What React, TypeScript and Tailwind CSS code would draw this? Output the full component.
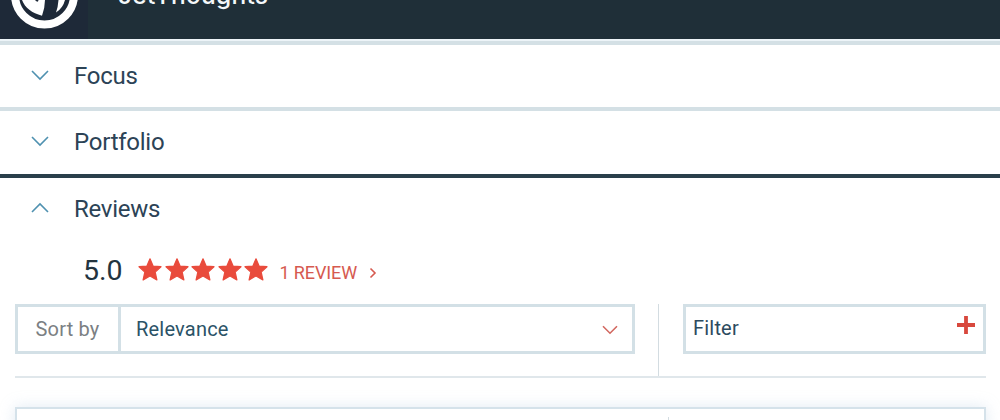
type ChevronProps = { up?: boolean; className?: string };

function Chevron({ up = false, className = "" }: ChevronProps) {
  return (
    <svg
      viewBox="0 0 18 12"
      className={`h-3 w-[18px] shrink-0 ${className}`}
      fill="none"
      stroke="currentColor"
      strokeWidth="1.6"
    >
      <path d={up ? "M1 10 9 2l8 8" : "M1 2l8 8 8-8"} />
    </svg>
  );
}

function Star() {
  return (
    <svg
      viewBox="0 0 24 24"
      className="h-6 w-6 shrink-0 fill-[#e94b3c] stroke-[#e94b3c]"
      strokeWidth="1.2"
      strokeLinejoin="round"
    >
      <path d="M12 .8 15.1 8.1 23 8.7 17.2 14.1 18.9 22 12 17.9 5.1 22 6.8 14.1 1 8.7 8.9 8.1Z" />
    </svg>
  );
}

function SectionTitle({ label, up }: { label: string; up?: boolean }) {
  return (
    <div className="flex h-[62px] items-center gap-[25px] pl-[31px] text-[#2c4356]">
      <Chevron up={up} className="mb-[3px] text-[#4f91b0]" />
      <h2 className="text-[24px] leading-[28px] tracking-[-0.25px]">{label}</h2>
    </div>
  );
}

export default function App() {
  return (
    <div className="h-[420px] w-full overflow-hidden bg-white font-['Roboto',sans-serif]">
      <header className="flex h-[39px] overflow-hidden bg-[#1f2f38]">
        <div className="h-full w-[88px] shrink-0 overflow-hidden bg-[#1e2938]">
          <svg viewBox="0 0 88 39" className="h-[39px] w-[88px]">
            <circle cx="44.5" cy="-5" r="29.5" fill="none" stroke="#fff" strokeWidth="8" />
            <path d="M22 0C25 8 32 13 42 15.7Q44.8 9 45 0H38.5Q38 3.5 35 0Z" fill="#fff" />
            <path d="M58.5 0Q58 7 56 12.5Q63 8 65 0Z" fill="#fff" />
          </svg>
        </div>
        <h1 className="-mt-[25px] h-9 pl-[30px] font-['Inter',sans-serif] text-[24.5px] font-medium leading-[40px] tracking-[0.25px] text-[#f4f8fa]">
          JetThoughts
        </h1>
      </header>

      <section className="border-t-[2px] border-[#edf4f8]">
        <div className="border-y-4 border-[#d4e0e5]">
          <SectionTitle label="Focus" />
        </div>
        <div className="pb-px">
          <SectionTitle label="Portfolio" />
        </div>
      </section>

      <section className="border-t-4 border-[#2a3f4b]">
        <SectionTitle label="Reviews" up />
        <div className="flex h-[64px] items-center pb-[4px] pl-[83px]">
          <span className="mt-px w-[55px] text-[28.5px] leading-8 text-[#23343f]">5.0</span>
          <div className="-mt-[1px] flex gap-[2.6px]">
            <Star />
            <Star />
            <Star />
            <Star />
            <Star />
          </div>
          <span className="ml-[11px] mt-[5px] text-[18px] leading-5 tracking-[-0.1px] text-[#d65a50]">
            1 REVIEW
          </span>
          <svg
            viewBox="0 0 8 12"
            className="ml-[12px] mt-[5px] h-3 w-2"
            fill="none"
            stroke="#d65a50"
            strokeWidth="1.6"
          >
            <path d="m1.5 1.5 4.5 4.5-4.5 4.5" />
          </svg>
        </div>

        <div className="mx-[15px] flex h-[74px] w-[971px] border-b-2 border-[#e0e7eb]">
          <div className="flex h-[50px] w-[620px] border-[3px] border-[#d3e0e6] text-[20px] tracking-[0.2px]">
            <span className="flex w-[103px] items-center border-r-[3px] border-[#d3e0e6] pl-[17.5px] text-[#7b8083]">
              Sort by
            </span>
            <span className="flex flex-1 items-center justify-between pl-[15px] pr-[14px] text-[#2b5367]">
              Relevance
              <svg
                viewBox="0 0 16 10"
                className="mt-[2px] h-[10px] w-4 shrink-0"
                fill="none"
                stroke="#d2675f"
                strokeWidth="1.6"
              >
                <path d="m1 1.2 7 7 7-7" />
              </svg>
            </span>
          </div>
          <div className="ml-[23px] w-px bg-[#d3dce1]" />
          <div className="ml-6 flex h-[50px] w-[303px] justify-between border-[3px] border-[#d3e0e6] pl-[7px] pr-[7.5px] text-[20px] tracking-[0.2px] text-[#2c4a5e]">
            <span className="leading-[43px]">Filter</span>
            <svg
              viewBox="0 0 20 20"
              className="mt-[8px] h-5 w-5"
              fill="none"
              stroke="#d8483d"
              strokeWidth="3.8"
            >
              <path d="M10 1v18M1 10h18" />
            </svg>
          </div>
        </div>

        <article className="mx-[15px] mt-[29px] flex h-[80px] w-[971px] border-2 border-[#d5e2ea] bg-white pt-2 shadow-[0_0_14px_rgba(170,195,220,0.35)]">
          <div className="w-[652px] border-r border-[#d3dce1]" />
        </article>
      </section>
    </div>
  );
}
